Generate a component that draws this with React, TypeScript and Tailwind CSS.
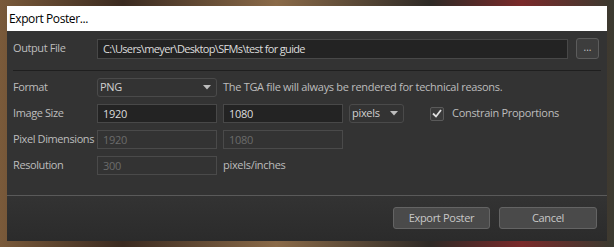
const font = { fontFamily: '"Open Sans", "Noto Sans", sans-serif' }

function Label({ children }: { children: React.ReactNode }) {
  return <div className="w-[84px] shrink-0 whitespace-nowrap text-[11px] tracking-[-0.4px] text-[#bdbdbd]">{children}</div>
}

function Field({ value, disabled, width = 'w-[120px]' }: { value: string; disabled?: boolean; width?: string }) {
  return (
    <div
      className={
        disabled
          ? `${width} h-[19px] border border-[#4a4a4a] bg-[#333333] px-[5px] text-[11px] leading-[17px] tracking-[-0.3px] text-[#6b6b6b]`
          : `${width} h-[19px] border border-[#484848] bg-[#232323] px-[5px] text-[11px] leading-[17px] tracking-[-0.3px] text-[#dcdcdc]`
      }
    >
      {value}
    </div>
  )
}

function Select({ value, width }: { value: string; width: string }) {
  return (
    <div
      className={`${width} flex h-[19px] items-center justify-between rounded-[3px] border border-[#4a4a4a] bg-[#333333] pl-[2px] pr-[5px] text-[11px] tracking-[-0.3px] text-[#d0d0d0]`}
    >
      <span>{value}</span>
      <svg width="8" height="5" viewBox="0 0 8 5">
        <path d="M0 0 L8 0 L4 4.5 Z" fill="#bdbdbd" />
      </svg>
    </div>
  )
}

export default function App() {
  return (
    <div
      className="h-[247px] w-[614px] overflow-hidden bg-[linear-gradient(90deg,#7a5a3a_0%,#3a2a20_20%,#8a6a48_45%,#2e2a26_70%,#7a2a2a_85%,#3a3a30_100%)] pb-[6px] pl-[7px] pr-[7px] pt-[6px]"
      style={font}
    >
      <div className="flex h-[235px] w-[600px] flex-col bg-[#333333]">
        <div className="flex h-[25px] items-center bg-white pl-[2px] text-[12px] tracking-[-0.4px] text-black">Export Poster...</div>

        <div className="flex flex-col px-[6px] pt-[7px]">
          <div className="flex items-center">
            <Label>Output File</Label>
            <div className="h-[20px] w-[471px] border border-[#484848] bg-[#232323] px-[5px] text-[11px] leading-[18px] tracking-[-0.65px] text-[#dcdcdc]">
              C:\Users\meyer\Desktop\SFMs\test for guide
            </div>
            <div className="ml-[8px] flex h-[21px] w-[23px] items-center justify-center rounded-[3px] border border-[#5c5c5c] bg-[#3d3d3d] pb-[3px] text-[10px] text-[#c8c8c8]">
              ...
            </div>
          </div>

          <div className="mt-[11px] h-px bg-[#1f1f1f]" />

          <div className="mt-[7px] flex flex-col gap-[7px]">
            <div className="flex items-center">
              <Label>Format</Label>
              <Select value="PNG" width="w-[120px]" />
              <div className="ml-[6px] whitespace-nowrap text-[11px] tracking-[-0.3px] text-[#bdbdbd]">
                The TGA file will always be rendered for technical reasons.
              </div>
            </div>
            <div className="flex items-center">
              <Label>Image Size</Label>
              <Field value="1920" />
              <div className="ml-[6px]">
                <Field value="1080" />
              </div>
              <div className="ml-[6px]">
                <Select value="pixels" width="w-[55px]" />
              </div>
              <div className="ml-[26px] flex h-[14px] w-[14px] items-center justify-center rounded-[2px] border border-[#5a5a5a] bg-[#3a3a3a]">
                <svg width="10" height="9" viewBox="0 0 10 9">
                  <path d="M1 4.5 L4 7.5 L9 1" stroke="#e0e0e0" strokeWidth="1.8" fill="none" />
                </svg>
              </div>
              <div className="ml-[8px] whitespace-nowrap text-[11px] tracking-[-0.3px] text-[#bdbdbd]">Constrain Proportions</div>
            </div>
            <div className="flex items-center">
              <Label>Pixel Dimensions</Label>
              <Field value="1920" disabled />
              <div className="ml-[6px]">
                <Field value="1080" disabled />
              </div>
            </div>
            <div className="flex items-center">
              <Label>Resolution</Label>
              <Field value="300" disabled />
              <div className="ml-[6px] whitespace-nowrap text-[11px] tracking-[-0.3px] text-[#bdbdbd]">pixels/inches</div>
            </div>
          </div>
        </div>

        <div className="mt-[20px] h-px bg-[#5a5a5a]" />

        <div className="flex flex-1 justify-end gap-[9px] bg-[linear-gradient(180deg,#333333,#2b2b2b)] pr-[10px] pt-[11px]">
          <div className="flex h-[22px] w-[97px] items-center justify-center rounded-[3px] border border-[#646464] bg-[#4a4a4a] text-[11px] tracking-[-0.3px] text-[#c8c8c8]">
            Export Poster
          </div>
          <div className="flex h-[22px] w-[98px] items-center justify-center rounded-[3px] border border-[#646464] bg-[#4a4a4a] text-[11px] tracking-[-0.3px] text-[#c8c8c8]">
            Cancel
          </div>
        </div>
      </div>
    </div>
  )
}
